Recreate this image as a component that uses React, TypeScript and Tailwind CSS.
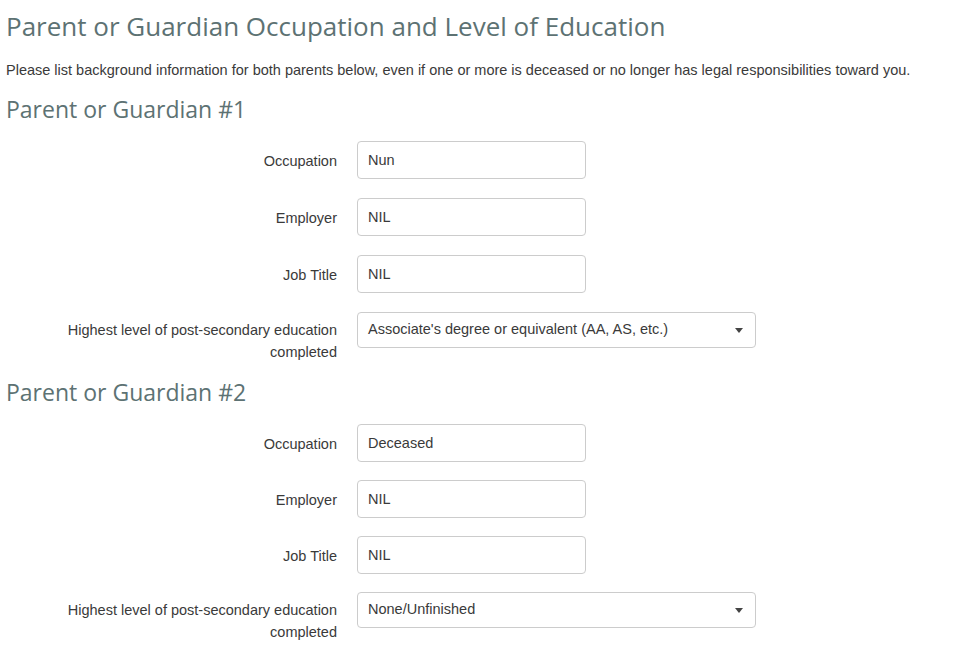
import React from 'react';

interface Parent {
  occupation: string;
  employer: string;
  jobTitle: string;
  education: string;
}

const parents: Parent[] = [
  { occupation: 'Nun', employer: 'NIL', jobTitle: 'NIL', education: "Associate's degree or equivalent (AA, AS, etc.)" },
  { occupation: 'Deceased', employer: 'NIL', jobTitle: 'NIL', education: 'None/Unfinished' },
];

const TextRow: React.FC<{ label: string; value: string; tight?: boolean }> = ({ label, value, tight }) => (
  <div className={`flex items-start ${tight ? 'mb-[18px]' : 'mb-[19px]'}`}>
    <label className="w-[331px] shrink-0 pl-[40px] pt-[10px] text-right text-[14.5px] leading-[20px] text-[#3a3a3a]">
      {label}
    </label>
    <div className="ml-[20px] w-[229px] h-[38px] rounded-[4px] border border-[#ccc] px-[10px] pt-[2px] flex items-center text-[14.5px] text-[#3a3a3a]">
      {value}
    </div>
  </div>
);

const SelectRow: React.FC<{ value: string }> = ({ value }) => (
  <div className="flex items-start">
    <label className="w-[331px] shrink-0 pl-[40px] pt-[7px] text-right text-[14.5px] leading-[22px] text-[#3a3a3a]">
      Highest level of post-secondary education completed
    </label>
    <div className="ml-[20px] w-[399px] h-[36px] rounded-[4px] border border-[#ccc] pl-[10px] pr-[12px] flex items-center justify-between text-[14.5px] text-[#3a3a3a]">
      <span>{value}</span>
      <svg width="8" height="5" viewBox="0 0 8 5">
        <path d="M0 0 L8 0 L4 5 Z" fill="#444" />
      </svg>
    </div>
  </div>
);

export default function App() {
  return (
    <div className="min-h-[645px] bg-white px-[6px] font-['Liberation_Sans',Arial,sans-serif]">
      <h1 className="pt-[8px] text-[26px] leading-[36px] text-[#5d7273] font-['Open_Sans',sans-serif]">
        Parent or Guardian Occupation and Level of Education
      </h1>
      <p className="mt-[16px] text-[14.5px] leading-[20px] text-[#3a3a3a]">
        Please list background information for both parents below, even if one or more is deceased or no longer has legal responsibilities toward you.
      </p>
      {parents.map((p, i) => (
        <section key={i}>
          <h2 className="mt-[14px] mb-[17px] text-[23px] leading-[30px] text-[#5d7273] font-['Open_Sans',sans-serif]">
            Parent or Guardian #{i + 1}
          </h2>
          <TextRow label="Occupation" value={p.occupation} tight={i === 1} />
          <TextRow label="Employer" value={p.employer} tight={i === 1} />
          <TextRow label="Job Title" value={p.jobTitle} tight={i === 1} />
          <SelectRow value={p.education} />
        </section>
      ))}
    </div>
  );
}
